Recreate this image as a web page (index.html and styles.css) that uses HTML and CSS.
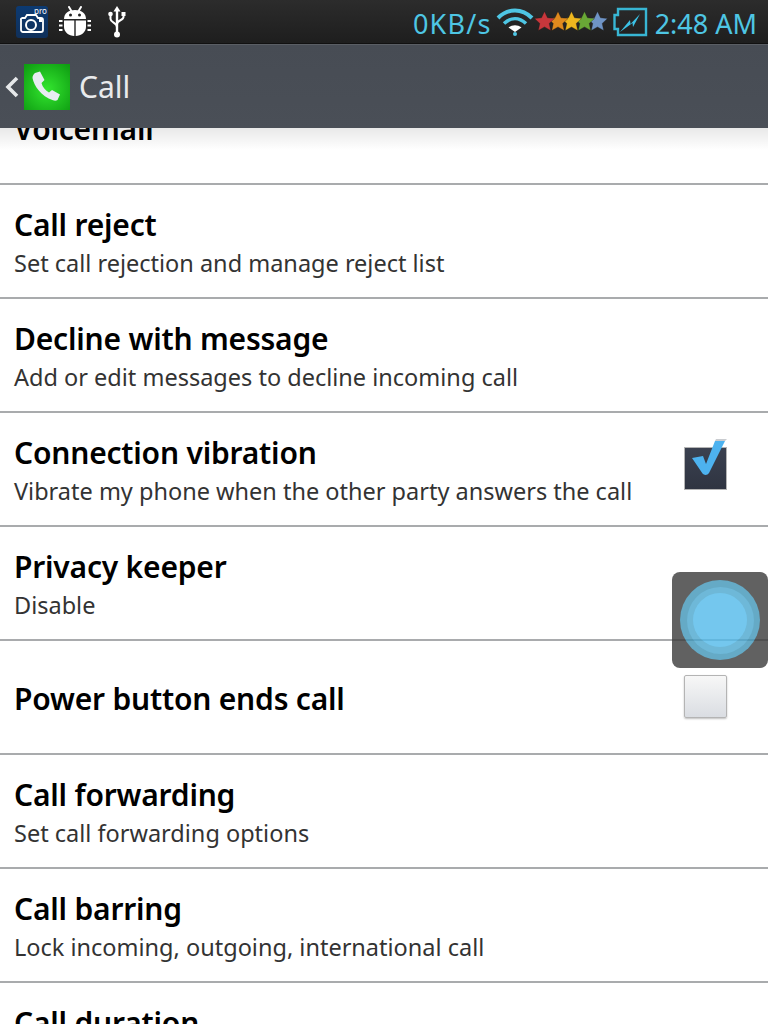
FILE: index.html
```html
<!DOCTYPE html>
<html>
	<head>
		<title>Call</title>
		<link rel="stylesheet" href="styles.css">
	</head>
	<body>
		<div id="phone">
			<div id="status">
				<div class="status-left">
					<svg class="ic-cam" viewBox="0 0 32 32">
						<defs><linearGradient id="camBg" x1="0" y1="0" x2="0" y2="1"><stop offset="0" stop-color="#0c3a72"/><stop offset="1" stop-color="#10305a"/></linearGradient></defs>
						<rect width="32" height="32" rx="3" fill="url(#camBg)"/>
						<path d="M6 12h3l2-3h9l2 3h3a2 2 0 0 1 2 2v10a2 2 0 0 1-2 2H7a2 2 0 0 1-2-2V14a1.500 1.500 0 0 1 1-2z" fill="none" stroke="#fff" stroke-width="1.800"/>
						<circle cx="15" cy="19" r="5" fill="none" stroke="#fff" stroke-width="2"/>
						<rect x="23" y="13" width="3" height="3" fill="#fff"/>
						<text x="18" y="7.500" class="pro">pro</text>
					</svg>
					<svg class="ic-bug" viewBox="0 0 32 32">
						<path d="M10 1l3 5M22 1l-3 5" stroke="#fff" stroke-width="2" stroke-linecap="round"/>
						<path d="M5 13c0-6 5-9 11-9s11 3 11 9z" fill="#fff"/>
						<path d="M5 14.500h10.300V30C10 30 5 26 5 21zM27 14.500H16.700V30C22 30 27 26 27 21z" fill="#fff"/>
						<circle cx="11.500" cy="9" r="1.500" fill="#222"/>
						<circle cx="20.500" cy="9" r="1.500" fill="#222"/>
						<path d="M0 15h3.500M0 19.500h3.500M0 24h3.500M28.500 15h3.500M28.500 19.500h3.500M28.500 24h3.500" stroke="#fff" stroke-width="2"/>
					</svg>
					<svg class="ic-usb" viewBox="0 0 18 32">
						<path d="M9 0l3.500 5.500h-7z" fill="#fff"/>
						<path d="M9 4v24" stroke="#fff" stroke-width="2.400"/>
						<path d="M2.500 9v4c0 3.500 6.500 4 6.500 8M15.500 9v2c0 3.500-6.500 3-6.500 7" fill="none" stroke="#fff" stroke-width="2"/>
						<circle cx="2.500" cy="8" r="2.300" fill="#fff"/>
						<rect x="13.500" y="6" width="4" height="4" fill="#fff"/>
						<circle cx="9" cy="28.500" r="3" fill="#fff"/>
					</svg>
				</div>
				<div class="status-right">
					<span class="speed">0KB/s</span>
					<svg class="ic-wifi" viewBox="0 0 38 30">
						<path d="M2 11C12 1 26 1 36 11" fill="none" stroke="#4ec6e4" stroke-width="4"/>
						<path d="M8 16.500C15 10 23 10 30 16.500" fill="none" stroke="#4ec6e4" stroke-width="3.500"/>
						<path d="M12.500 20.500c4-3 9-3 13 0l-6.500 4.500z" fill="#fff"/>
						<circle cx="19" cy="27" r="2" fill="#4ec6e4"/>
					</svg>
					<svg class="ic-stars" viewBox="0 0 74 22">
						<defs>
							<path id="star" d="M10.500 .5l3 6.300 7 .8-5.300 4.800 1.500 7.100-6.200-3.600-6.200 3.600 1.500-7.100L.5 7.600l7-.8z" stroke="#1a1614" stroke-opacity="0.6" stroke-width="0.500"/>
						</defs>
						<use href="#star" fill="#6f94c6" x="53"/>
						<use href="#star" fill="#69a836" x="40"/>
						<use href="#star" fill="#eeb71f" x="27"/>
						<use href="#star" fill="#e08a1e" x="13.500"/>
						<use href="#star" fill="#c8373c" x="0"/>
					</svg>
					<svg class="ic-batt" viewBox="0 0 36 30">
						<path d="M6 2h28v26H6v-6H2.500V8H6z" fill="none" stroke="#38b6d4" stroke-width="2.400"/>
						<path d="M8 25l10-12 .5 4L28 7l-7 13-.5-4z" fill="#3cc2e6"/>
					</svg>
					<span class="clock">2:48 AM</span>
				</div>
			</div>
			<div id="titlebar">
				<svg class="ic-back" viewBox="0 0 14 24"><path d="M12 3L3 12l9 9" fill="none" stroke="#e6e8ea" stroke-width="3.600"/></svg>
				<svg class="ic-phone" viewBox="0 0 46 46">
					<defs><radialGradient id="callBg" cx="0.5" cy="0.55" r="0.7"><stop offset="0" stop-color="#33e62f"/><stop offset="1" stop-color="#0f9e12"/></radialGradient></defs>
					<rect width="46" height="46" fill="url(#callBg)"/>
					<path d="M11 9l5-1.500 4.500 8.500-3 3c1 4 4 7.500 7.500 9.500l3-2.500 8 4.500-2.500 5.500c-1 .8-3 .8-4.500 .3C17 32 10 22 8.500 14c0-2 1-4 2.500-5z" fill="#e8ecf2"/>
				</svg>
				<span class="title">Call</span>
			</div>
			<div id="listclip">
				<div id="list">
					<div class="row"><div class="texts"><div class="name">Voicemail</div></div></div>
					<div class="row"><div class="texts"><div class="name">Call reject</div><div class="sub">Set call rejection and manage reject list</div></div></div>
					<div class="row"><div class="texts"><div class="name">Decline with message</div><div class="sub">Add or edit messages to decline incoming call</div></div></div>
					<div class="row">
						<div class="texts"><div class="name">Connection vibration</div><div class="sub">Vibrate my phone when the other party answers the call</div></div>
						<div class="check on">
							<svg viewBox="0 0 44 50"><path d="M43 1H32l-1 2h10z" fill="#c9ccd0"/><path d="M8 20l11-2 3 8L31 3h10L25 35c-1.500 2.500-5 2.500-6.500 .5z" fill="#4db2ef"/></svg>
						</div>
					</div>
					<div class="row"><div class="texts"><div class="name">Privacy keeper</div><div class="sub">Disable</div></div></div>
					<div class="row">
						<div class="texts"><div class="name">Power button ends call</div></div>
						<div class="check"></div>
					</div>
					<div class="row"><div class="texts"><div class="name">Call forwarding</div><div class="sub">Set call forwarding options</div></div></div>
					<div class="row"><div class="texts"><div class="name">Call barring</div><div class="sub">Lock incoming, outgoing, international call</div></div></div>
					<div class="row"><div class="texts"><div class="name">Call duration</div><div class="sub">View call duration</div></div></div>
				</div>
				<div id="shade"></div>
			</div>
			<div id="floater"><div class="ring1"><div class="ring2"><div class="ring3"></div></div></div></div>
		</div>
	</body>
</html>
```

FILE: styles.css
```css
* {
	margin: 0; padding: 0;
	box-sizing: border-box;
}

html, body {
	height: 100%;
	overflow: hidden;
}

body {
	font-family: "Noto Sans", "Open Sans", sans-serif;
	background: #fff;
}

#phone {
	position: relative;
	height: 1024px;
	display: flex;
	flex-direction: column;
	overflow: hidden;
}

/* status bar */

#status {
	height: 44px;
	background: linear-gradient(#2c2c2c, #1e1e1e);
	border-bottom: 1px solid #111;
	display: flex;
	align-items: center;
	justify-content: space-between;
	padding: 0 11px 0 16px;
	flex: none;
}

.status-left, .status-right {
	display: flex;
	align-items: center;
}

.ic-cam { width: 32px; height: 32px; }
.ic-bug { width: 32px; height: 32px; margin-left: 11px; }
.ic-usb { width: 18px; height: 32px; margin-left: 17px; }

.pro {
	font-size: 8px;
	fill: #fff;
	font-family: "Noto Sans", sans-serif;
}

.speed, .clock {
	color: #4ec6e4;
	font-size: 27px;
	line-height: 40px;
	margin-top: 4px;
	white-space: nowrap;
}

.speed { letter-spacing: 1.2px; }

.ic-wifi { width: 38px; height: 30px; margin-left: 4px; }
.ic-stars { width: 74px; height: 22px; }
.ic-batt { width: 36px; height: 30px; margin-left: 4px; }
.clock { margin-left: 7px; }

/* title bar */

#titlebar {
	height: 84px;
	background: linear-gradient(#474c54, #4a4f57);
	border-top: 1px solid #5a5e64;
	display: flex;
	align-items: center;
	padding-left: 5px;
	flex: none;
}

.ic-back { width: 14px; height: 24px; }
.ic-phone { width: 46px; height: 46px; margin-left: 5px; }

.title {
	color: #e8eaec;
	font-size: 30px;
	margin-left: 9px;
}

/* list */

#listclip {
	position: relative;
	flex: 1;
	overflow: hidden;
}

#list {
	margin-top: -57px;
}

#shade {
	position: absolute;
	top: 0; left: 0; right: 0;
	height: 22px;
	background: linear-gradient(rgba(0,0,0,0.09), rgba(255,255,255,0));
}

.row {
	height: 114px;
	border-bottom: 2px solid #a9abad;
	padding: 0 14px;
	display: flex;
	align-items: center;
	justify-content: space-between;
}

.texts {
	padding-top: 3px;
}

.name {
	color: #000;
	font-size: 30px;
	font-weight: 600;
	line-height: 40px;
	letter-spacing: -0.2px;
}

.sub {
	color: #333;
	font-size: 23.5px;
	line-height: 34px;
	margin-top: 1px;
}

.check {
	width: 43px; height: 43px;
	margin-right: 27px;
	margin-top: -2px;
	position: relative;
	border: 1px solid #b4b4b4;
	border-radius: 2px;
	background: linear-gradient(#f7f7f7, #dadde2);
	box-shadow: 0 1px 2px rgba(0,0,0,0.25);
}

.check.on {
	background: linear-gradient(#3b4150, #2f3441);
	box-shadow: none;
	border-radius: 0;
}

.check svg {
	position: absolute;
	left: -1px; top: -10px;
	width: 44px; height: 50px;
}

/* floating button, the row line shows through it */

#floater {
	position: absolute;
	left: 672px; top: 572px;
	width: 96px; height: 96px;
	border-radius: 8px;
	background: #3a3a3a;
	opacity: 0.8;
	display: flex;
	align-items: center;
	justify-content: center;
}

.ring1, .ring2, .ring3 {
	border-radius: 50%;
	display: flex;
	align-items: center;
	justify-content: center;
}

.ring1 { width: 80px; height: 80px; background: #3f95b8; }
.ring2 { width: 67px; height: 67px; background: #4aa7cf; }
.ring3 { width: 54px; height: 54px; background: #52baeb; }
```
